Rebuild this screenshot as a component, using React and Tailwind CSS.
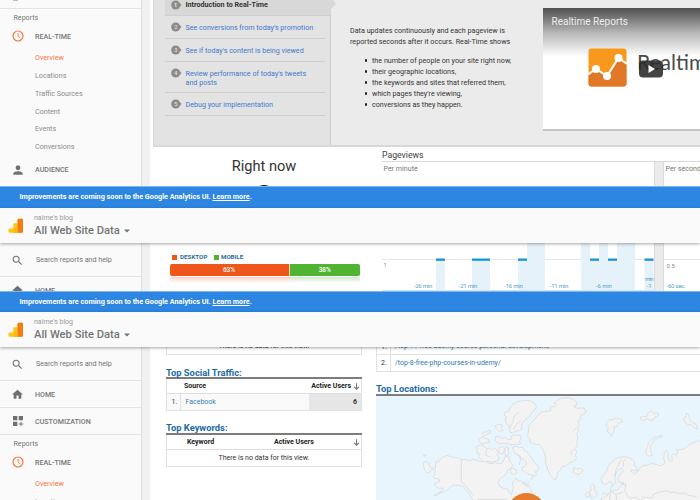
import React from "react";

const IMPROVE = "Improvements are coming soon to the Google Analytics UI.";

function Header({ bannerClass }) {
  return (
    <div className="relative z-10">
      <div className={`flex items-center border-t border-[#7db5ee] bg-[#2d86e2] pl-[19.5px] text-[7.25px] font-bold text-white ${bannerClass}`}>
        <span className="whitespace-nowrap">
          {IMPROVE} <span className="underline">Learn more</span>.
        </span>
      </div>
      <div className="flex h-[35px] bg-[#fafafa] shadow-[0_1px_3px_rgba(0,0,0,0.35)]">
        <svg className="ml-2 mt-[10px] h-[16px] w-[16px] shrink-0" viewBox="0 0 16 16">
          <path d="M.5 11.6a1 1 0 0 1 1-1h3.8V6.2a1 1 0 0 1 1-1h3.2V2a1.2 1.2 0 0 1 1.2-1.2h3A1.2 1.2 0 0 1 15 2v11.800a1 1 0 0 1-1 1H1.500a1 1 0 0 1-1-1z" fill="#ffc517" />
          <path d="M9.500 2A1.200 1.200 0 0 1 10.700.8h3A1.200 1.200 0 0 1 15 2v11.800a1 1 0 0 1-1 1H9.500z" fill="#f57c13" />
          <path d="M5.300 10.600h4.200v4.200H5.300z" fill="#ffb80c" />
        </svg>
        <div className="ml-[10px] pt-[5px]">
          <div className="h-[10px] text-[7px] leading-[11px] text-[#999]">naime's blog</div>
          <div className="flex h-[15px] items-center text-[11.2px] font-medium leading-[15px] text-[#757575]">
            <span className="whitespace-nowrap">All Web Site Data</span>
            <svg className="ml-[4px] h-[4px] w-[6px]" viewBox="0 0 6 4">
              <path d="M0 .5h6L3 3.500z" fill="#757575" />
            </svg>
          </div>
        </div>
      </div>
    </div>
  );
}

function Row({ icon, label, className = "h-[26px]" }) {
  return (
    <div className={`flex shrink-0 items-center ${className}`}>
      <div className="flex w-[35px] justify-center">{icon}</div>
      <span className="pt-[2px] text-[7.1px] font-medium text-[#757575]">{label}</span>
    </div>
  );
}

const Clock = () => (
  <svg className="size-[12px]" viewBox="0 0 12 12" fill="none" stroke="#f9763c">
    <circle cx="6" cy="6" r="5" strokeWidth="1.200" />
    <path d="M6 3v3.200l2 1.500" strokeWidth=".9" />
  </svg>
);
const Person = () => (
  <svg className="size-[14px]" viewBox="0 0 24 24" fill="#707070">
    <path d="M12 12c2.210 0 4-1.790 4-4s-1.790-4-4-4-4 1.790-4 4 1.790 4 4 4zm0 2c-2.670 0-8 1.340-8 4v2h16v-2c0-2.660-5.330-4-8-4z" />
  </svg>
);
const Home = () => (
  <svg className="size-[13px]" viewBox="0 0 24 24" fill="#707070">
    <path d="M10 20v-6h4v6h5v-8h3L12 3 2 12h3v8z" />
  </svg>
);
const Customize = () => (
  <svg className="size-[12px]" viewBox="0 0 12 12" fill="#707070">
    <path d="M1 1h4.300v4.300H1zM6.700 1H11v4.300H6.700zM1 6.700h4.300V11H1zM8.500 6.700h.9V8.500h1.800v.9H9.400v1.800h-.9V9.400H6.700v-.9h1.800z" />
  </svg>
);

function Search() {
  return (
    <div className="flex h-[34px] shrink-0 items-center border-b border-[#e4e4e4] text-[7.2px] text-[#757575]">
      <svg className="ml-[11px] mt-px size-[13px]" viewBox="0 0 24 24" fill="#757575">
        <path d="M15.500 14h-.79l-.28-.27A6.470 6.470 0 0 0 16 9.500 6.500 6.500 0 1 0 9.500 16c1.610 0 3.090-.59 4.230-1.570l.27.28v.79l5 4.990L20.490 19l-4.990-5zm-6 0C7.010 14 5 11.990 5 9.500S7.010 5 9.500 5 14 7.010 14 9.500 11.990 14 9.500 14z" />
      </svg>
      <span className="ml-[12px] pt-[2px]">Search reports and help</span>
    </div>
  );
}

const subs = ["Overview", "Locations", "Traffic Sources", "Content", "Events", "Conversions"];

function Reports() {
  return (
    <>
      <div className="flex h-[17px] shrink-0 items-center pl-[13.500px] pt-px text-[7.1px] text-[#757575]">Reports</div>
      <Row className="h-5" icon={<Clock />} label="REAL-TIME" />
      <div className="mt-[3px] h-[107px] shrink-0 pt-px">
        {subs.map((s, i) => (
          <div key={s} className={`flex h-[17.700px] items-center pl-[35px] text-[7.15px] ${i ? "text-[#8b8b8b]" : "text-[#f9763c]"}`}>
            {s}
          </div>
        ))}
      </div>
    </>
  );
}

function Section({ height, side, children }) {
  return (
    <div className={`flex overflow-hidden ${height}`}>
      <div className="flex w-[142px] shrink-0 flex-col overflow-hidden border-r border-[#dedede] bg-[#fafafa]">{side}</div>
      <div className="w-2 shrink-0 bg-[#f1f1f1]" />
      <div className="min-w-0 flex-1 bg-white">{children}</div>
    </div>
  );
}

function Step({ n, className, children }) {
  return (
    <div className={`flex border-b border-[#cfcfcf] pl-[6px] text-[7.15px] leading-[9px] ${className}`}>
      <svg className="h-[10px] w-[11px] shrink-0" viewBox="0 0 11 10">
        <path d="M8.500 2.800L10.500 5L8.500 7.200z" fill="#8b8b8b" />
        <circle cx="4.700" cy="5" r="4.500" fill="#8b8b8b" />
        <text x="4.700" y="7" textAnchor="middle" fontSize="5.500" fill="#eee">{n}</text>
      </svg>
      <span className="ml-[3.500px] whitespace-nowrap">{children}</span>
    </div>
  );
}

function Video() {
  return (
    <div className="mt-2 h-[123px] w-[157px] shrink-0 overflow-hidden border-b-2 border-[#c4c4c4] bg-white">
      <div className="h-[121px] bg-linear-to-b from-[#505050] via-[#b5b5b5] via-20% to-white to-40%">
        <div className="pl-[8.500px] pt-[7px] text-[10px] leading-[14px] text-[#eee]">Realtime Reports</div>
        <div className="flex pl-[45px] pt-[19px]">
          <svg className="size-[39px] shrink-0" viewBox="0 0 39 39">
            <rect x=".5" y=".5" width="38" height="38" rx="3" fill="#f8981d" />
            <path d="M.5 27L8 21l11 7L31 11l7.500 5v19.500a3 3 0 0 1-3 3h-32a3 3 0 0 1-3-3z" fill="#e07827" />
            <path d="M0 26.500L8 21l11 7L30.500 10l8.500 6" fill="none" stroke="#fff" strokeWidth="2" />
            <circle cx="8" cy="21" r="4" fill="#fff" />
            <circle cx="19" cy="28" r="4" fill="#fff" />
            <circle cx="30.500" cy="10" r="4" fill="#fff" />
          </svg>
          <div className="relative ml-[10px] h-[39px] font-[Lato] text-[21px] leading-[28px] text-[#4a4a4a]">
            Realtime
            <svg className="absolute left-[2px] top-[12px] h-[18px] w-[24px]" viewBox="0 0 24 18">
              <rect y=".500" width="24" height="17" rx="4" fill="#292929" fillOpacity=".88" />
              <path d="M9.500 5v8l6.500-4z" fill="#fff" />
            </svg>
          </div>
        </div>
      </div>
    </div>
  );
}

function HelpPanel() {
  return (
    <div className="ml-[3px] flex h-[147px] border-b-2 border-l border-[#d8d8d8] bg-[#ebebeb]">
      <div className="w-[177px] shrink-0 border-r border-[#cfcfcf] bg-[#e3e3e3] pl-[11px] text-[#3f79ce]">
        <div className="relative -mr-px">
          <Step n="1" className="h-[16px] bg-[#d8d8d8] font-bold text-[#333]">Introduction to Real-Time</Step>
          <svg className="absolute -right-[5px] top-0 h-[9px] w-[5px]" viewBox="0 0 5 9">
            <path d="M0 0h2l3 4-5 5z" fill="#d8d8d8" />
          </svg>
        </div>
        <div className="mr-[5px] [&_span]:pt-px">
          <Step n="2" className="h-[23px] pt-[6px]">See conversions from today's promotion</Step>
          <Step n="3" className="h-[23px] pt-[6px]">See if today's content is being viewed</Step>
          <Step n="4" className="h-[31px] pt-[6px]">Review performance of today's tweets<br />and posts</Step>
          <Step n="5" className="h-[23px] pt-[6px]">Debug your implementation</Step>
        </div>
      </div>
      <div className="w-[212px] shrink-0 whitespace-nowrap pl-[19px] pt-[25px] text-[7.180px] leading-[11px] text-[#333]">
        <p>Data updates continuously and each pageview is<br />reported seconds after it occurs. Real-Time shows</p>
        <ul className="mt-[8px] pl-[14.500px]">
          {["the number of people on your site right now,", "their geographic locations,", "the keywords and sites that referred them,", "which pages they're viewing,", "conversions as they happen."].map((t) => (
            <li key={t} className="flex items-center">
              <span className="mr-[5px] size-[2.500px] rounded-full bg-[#222]" />
              {t}
            </li>
          ))}
        </ul>
      </div>
      <Video />
    </div>
  );
}

function RightNow() {
  return (
    <div className="flex h-[39px] overflow-hidden">
      <div className="w-[228px] shrink-0 pt-[8px] text-center text-[#333]">
        <div className="h-[22px] text-[14.600px] leading-[23px]">Right now</div>
        <div className="text-[42px] leading-[48px] text-[#222]">8</div>
      </div>
      <div className="ml-1 flex-1">
        <div className="h-[15px] border-b border-[#d9d9d9] text-[8.700px] leading-[16px] text-[#444]">Pageviews</div>
        <div className="flex h-[24px] text-[7.100px] leading-[14px] text-[#777]">
          <div className="w-[272px] pl-[1.500px]">Per minute</div>
          <div className="w-[10px] border-x border-[#dcdcdc] bg-[#ebebeb]" />
          <div className="whitespace-nowrap pl-[1.500px]">Per second</div>
        </div>
      </div>
    </div>
  );
}

function Devices() {
  return (
    <div className="w-[228px] shrink-0 pl-[19.500px] pt-[11px]">
      <div className="flex h-[7px] items-center pl-[2.500px] text-[6.150px] font-bold leading-[7px] text-[#2c6d9c]">
        <span className="mr-[3px] size-[5px] bg-[#ee561c]" />
        <span className="w-[33.500px] tracking-[0.050px]">DESKTOP</span>
        <span className="mr-[2.500px] size-[5px] bg-[#50b432]" />
        <span>MOBILE</span>
      </div>
      <div className="mt-[3px] flex h-[12px] w-[190.500px] overflow-hidden rounded-[2px] text-[6.500px] font-medium leading-[13px] text-white">
        <div className="w-[120px] border-r border-[#d9dcae] bg-[#ee561c] text-center">63%</div>
        <div className="flex-1 bg-[#50b432] text-center">38%</div>
      </div>
      <div className="mt-px flex h-[6px] w-[190.500px] overflow-hidden rounded-[2px]">
        <div className="w-[120px] bg-linear-to-b from-[#fbd0c0] to-white" />
        <div className="flex-1 bg-linear-to-b from-[#cfe9c7] to-white" />
      </div>
    </div>
  );
}

const bars = [[436, 9, 1], [472, 18, 1], [518, 9, 1], [527, 18, 0], [581, 9, 0], [590, 9, 1], [599, 9, 0], [608, 9, 1], [617, 18, 0], [644.5, 9, 1]];
const labels = [["-26 min", 423], ["-21 min", 468], ["-16 min", 513.5], ["-11 min", 559], ["-6 min", 604]];

function Chart() {
  return (
    <svg className="h-[48px] w-[322px] shrink-0" viewBox="378 243 322 48" fontSize="6" fill="#5b9fc7">
      <path d="M382 259.500h272M664 259.500h36" stroke="#e6e6e6" />
      {bars.map(([x, w, m]) => (
        <g key={x}>
          <rect x={x} y={m ? 259 : 243} width={w} height={m ? 31 : 47} fill="#e5f2fa" />
          {m === 1 && <rect x={x} y="258.500" width={w} height="2.300" fill="#1695ce" />}
        </g>
      ))}
      <path d="M382 290.500h272" stroke="#cde6f3" />
      <rect x="654" y="243" width="10" height="48" fill="#ebebeb" />
      <path d="M654.500 243v48M663.500 243v48" stroke="#dcdcdc" />
      {labels.map(([t, x]) => <text key={t} x={x} y="288.300" textAnchor="middle" textLength={t.length * 2.640}>{t}</text>)}
      <text x="649.300" y="281" textAnchor="middle" textLength="8.500">min</text>
      <text x="649" y="288.300" textAnchor="middle">-1</text>
      <text x="383.500" y="266.500" fill="#888">1</text>
      <text x="666.500" y="267.800" fill="#888">0.5</text>
      <text x="666.500" y="288.300" textLength="18">-60 sec</text>
    </svg>
  );
}

const Arrow = () => (
  <svg className="size-[7px]" viewBox="0 0 7 7" fill="none" stroke="#777" strokeWidth="1.100">
    <path d="M3.500.3v5.700M1 3.800l2.500 2.400L6 3.800" />
  </svg>
);

function Title({ children, className }) {
  return (
    <div className={`border-b-2 border-[#7d7d7d] text-[9.350px] font-bold text-[#1c6ba5] ${className}`}>{children}</div>
  );
}

function Tables() {
  return (
    <div className="w-[196px] shrink-0 text-[7px] text-[#333]">
      <div className="flex h-[8px] items-end justify-center border border-t-0 border-[#e2e2e2]">
        <span className="leading-[16px]">There is no data for this view.</span>
      </div>
      <Title className="mt-[11px] h-[13px] leading-[13px]">Top Social Traffic:</Title>
      <div className="border border-t-0 border-[#e2e2e2]">
        <div className="flex h-[14px] items-center justify-between pl-[17px] pr-px font-bold text-[#222]">
          <span className="pt-px">Source</span>
          <span className="flex items-center gap-[2px] pt-px">Active Users <Arrow /></span>
        </div>
        <div className="flex h-[17px] items-center border-t border-[#dedede] bg-[#f9f9f9]">
          <span className="flex h-full w-[13.500px] items-center border-r border-[#e2e2e2] pl-[4.500px] pt-px">1.</span>
          <span className="pl-[5px] pt-px text-[#3b82b5]">Facebook</span>
          <span className="ml-auto flex h-full w-[52px] items-center justify-end bg-[#e6e6e6] pr-[4px] pt-px font-bold">6</span>
        </div>
      </div>
      <Title className="mt-[11px] h-[13px] leading-[12px]">Top Keywords:</Title>
      <div className="border border-t-0 border-[#e2e2e2]">
        <div className="flex h-[15px] items-center border-b border-[#dedede] pl-[20px] font-bold text-[#222]">
          <span className="w-[87px]">Keyword</span>
          <span>Active Users</span>
          <span className="ml-auto mr-px"><Arrow /></span>
        </div>
        <div className="flex h-[16px] items-center justify-center">There is no data for this view.</div>
      </div>
    </div>
  );
}

// Outlines on a grid three times finer than the map.
const land = [
  // Alaska and mainland Canada
  "M48 213l12-4 6-9 14-7 20 6 12 1 12 5 14 1 12 4 10-6 8 5 14 3 12-1 16 6 10 1 6-5 8 6 12-3 6-10 5-10 8-1 3 12 6 10 5 6-7 10-10 4-2 10-8 8-12 8-6 12 6 12 12 6 10 1 6 12 6 6 4-14 2-12-3-10 6-8 6-7 4 8 12 2 10 3 4 12 8-2 4 8 6 14 10 12 8 8v22H196l-26-12-14-12-8-16-10-10-8-12-8-2-14-2-12 1-8 8-10 8-14 6-12 7-12 3 14-8 12-8 4-8-14 1-8-6-5-7 9-5 8-3-4-8-10-1-8-5 6-5z",
  // Western islands
  "M10 214l10-3 6 7 4 9 12 6-10 4-4 9-8-2-6-8-3-10z",
  "M10 192l8 0-4 4z",
  // Arctic archipelago
  "M262 100l-6-10 3-12-6-6 2-9 12-1 4-14 8-8 14-8 16-3 14-1 12 4 10 6 5 9-6 10-10 9-4 10-12 8-8 8-6 12 2 10-10 5-8 1-10 6-8-2-2-10 4-8z",
  "M170 166l10-4 12 3 8 9 8-3 10 5 8-4 8 8-3 12 6 6-2 10-12 4-12 1-10-3-10 3-8-8-8-8 4-8-8-4z",
  "M176 144l12-6 8 3 12 6 0 7-14 3-8 1-8-5zM186 128l10-6 14-4 4 6-12 5-8 6zM226 104l10-4 12 2-4 9 5 8-12 2-8-8z",
  "M226 138l12-2 8 8 10-6 6 8 12-1 0-10 14-3 14 2 2 10-6 6 4 8-16 3-16-1-14-4-10 2-12-2-8-6z",
  "M238 170l10-3 6 8-4 12-12 1-2-10zM256 168l10 2-2 12 4 6-10 8-4-12z",
  "M276 170l12-4 10 4 10-2 6 12 8 3 8 12 6 5 4 12 10 7 6 10-2 10-8 2 4 10-8 6-10-6-10-2-8-8-8-3 0-8 10-4 4-10-6-10-10-4-4-8-12-4-6-10-4-8z",
  "M270 238l8-6 10 4 3 10-10 5-8-4z",
  // Greenland
  "M328 100l12-10 10-14 14-12 8-2 20-2 0-14 10 2 8-8-8-4 12-10 16-6 18 1 14 5 8 8 0 8-10 4 12 6 20-1 6 12-8 8-8 2 0 12-8 4 4 12-6 8 4 10-6 10 4 12-4 12 3 10-8 10 6 10-5 10 4 8-10 10-10 4-10 8-14 4-4 10-8 6-4 14-4 10-6-3-8-10-8-16-4-14-4-8 2-14-5-16-6-14-8-10-18-4-12-5 2-10-8-6z",
  // Iceland
  "M459 234l8-3 4 4 10-4 9 6-5 7-10 6-10-3-8-2 4-5z",
  // Svalbard and the northern islands
  "M560 92l10-7 8 2 6-5 20 2 4 8-12 4-4 10-10 2 0 12-8 16-5-10-8-4 4-10-5-8z",
  "M660 80l10-4 10 1 4-10 8-8 8 8 14-1 2 8-12 4-2 8-12 2-8-6-10 6-8-2z",
  "M790 82l8-4 2-12 6 4 2 14 8 10 12 6 6 14-10-3-10-10-8 1-10-6z",
  "M680 190l-3-10 6-12 2-14 10-10 14-6 16-6 2 5-12 4-14 8-6 10-4 12 2 14 4 8-8 3z",
  // Mainland Europe and Asia
  "M546 276l-3-14 10-12 8-10 3-12 8-12 10-10 14-6 14-3 16 3 14 8 4 8-4 6 8 4 4 14-14-3-6 2 8 9 12-3 6-12 10-8 14-3 12-5 14 3 10 4 12-3 5-8-4-10 2-16 6-10 6 10 0 18 6 8 6-6-2-14 6-6 8 6 4-10-4-8 10 2 14-4 12-10 14-8 16-5 10-8 10 5v202H556l-10-8 4-10-8-8 12-4 10-7 8-12 4-10 0-12-4-8-6 4-6 6-8-1z",
  // British Isles
  "M510 286l8-6 6 4-2 10 8 10 0 10-10 6-10 1 4-8-6-8 6-6zM498 308l6-6 6 4-2 10-10 2z",
];

function WorldMap() {
  return (
    <svg className="h-[105px] w-[324px]" viewBox="376 395 324 105" preserveAspectRatio="none">
      <rect x="376" y="395" width="324" height="105" fill="#e8f5fd" />
      <g transform="translate(420 390) scale(.33333)" fill="#f3f3f3" stroke="#d6dadc" strokeWidth="2.400" strokeLinejoin="round">
        {land.map((d) => <path key={d} d={d} />)}
        <path d="M572 292l8-10 8-10-4-12 4-14 10-12 8-2 4 8-12 14-4 12 6 10 12-1-6 8-8 6-4 8-12 1-8 4z" fill="#e8f5fd" />
        <path d="M124 206v66l12 10 10 14 16 18M172 325h90M584 256l4-20 10-20 8-12M610 228l0-16 8-8M604 278l14 3-4 18 8 12M546 306l16 4 14-8 12 8 20-6M568 330l4-22M590 328l-2-18M662 330l8-12 26 3 6-12 18-6 20-4 14 6 10-2 16 6 12-4 14 8 24 4M620 312l10 10 20-4 12 12M264 110l14-14 4-20 14-12M280 116l10-16 14-12M292 188l10 16-4 18M200 176l-4 14 12 8M468 110l-8 12M462 174l-10 10 4 12M340 250l-6 16M306 276l14 6 6-8" fill="none" stroke="#d6d8d9" />
      </g>
      <circle cx="526.500" cy="511" r="19" fill="#e67c2c" />
    </svg>
  );
}

function Pages() {
  return (
    <div className="ml-[14px] min-w-0 flex-1 overflow-hidden text-[6.950px] text-[#333]">
      <div className="flex h-[8px] items-end border-b border-l border-[#e2e2e2]">
        <span className="h-full w-[14px] border-r border-[#e2e2e2] pl-[4px] leading-[0px]">1.</span>
        <span className="whitespace-nowrap pl-[4px] leading-[15px] text-[#2f77ad]">/top-11-free-udemy-course-personal-development/</span>
      </div>
      <div className="flex h-[17px] items-center border-b border-l border-[#e2e2e2]">
        <span className="flex h-full w-[14px] items-center border-r border-[#e2e2e2] pl-[4px] pt-px">2.</span>
        <span className="pl-[4px] pt-px text-[#2f77ad]">/top-8-free-php-courses-in-udemy/</span>
      </div>
      <Title className="mt-[11px] h-[13px] leading-[12px]">Top Locations:</Title>
      <WorldMap />
    </div>
  );
}

export default function App() {
  return (
    <div className="h-[500px] w-[700px] overflow-hidden bg-white font-[Roboto,sans-serif]">
      <Section
        height="h-[186px]"
        side={
          <>
            <div className="flex h-[9px] shrink-0 justify-center border-b border-[#e4e4e4] pr-[111px]">
              <span className="h-px w-[5px] bg-[#bbb]" />
            </div>
            <Reports />
            <Row icon={<Person />} label="AUDIENCE" className="h-[27px]" />
          </>
        }
      >
        <HelpPanel />
        <RightNow />
      </Section>
      <Header bannerClass="h-[22px]" />
      <Section height="h-[48px]" side={<><Search /><Row icon={<Home />} label="HOME" /></>}>
        <div className="flex">
          <Devices />
          <Chart />
        </div>
      </Section>
      <Header bannerClass="h-[21px]" />
      <Section
        height="h-[153px]"
        side={
          <>
            <Search />
            <Row icon={<Home />} label="HOME" className="h-[27px] border-b border-[#e4e4e4]" />
            <Row icon={<Customize />} label="CUSTOMIZATION" className="h-[27px] border-b border-[#e4e4e4]" />
            <Reports />
          </>
        }
      >
        <div className="flex pl-[16px]">
          <Tables />
          <Pages />
        </div>
      </Section>
    </div>
  );
}
